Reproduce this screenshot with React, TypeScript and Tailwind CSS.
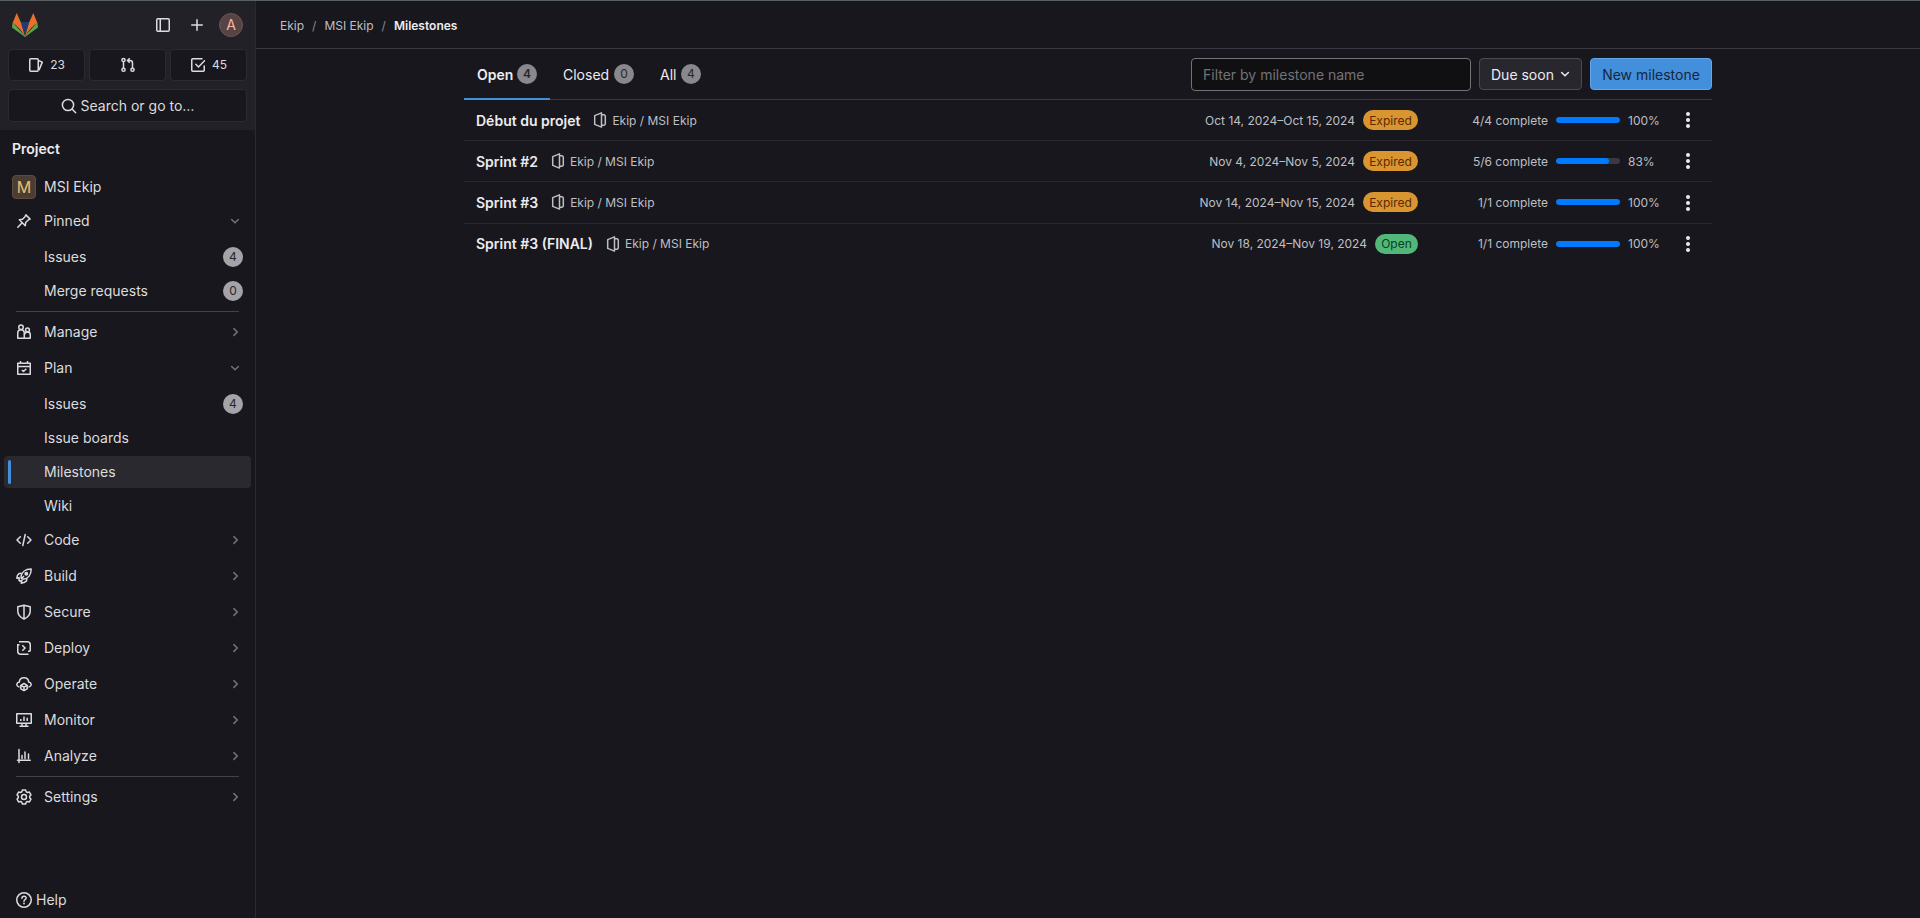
import React from "react";

type IconProps = { children: React.ReactNode; className?: string; size?: number };

function Icon({ children, className = "", size = 16 }: IconProps) {
  return (
    <svg
      width={size}
      height={size}
      viewBox="0 0 16 16"
      fill="none"
      stroke="currentColor"
      strokeWidth="1.5"
      className={"shrink-0 " + className}
    >
      {children}
    </svg>
  );
}

const ChevronDown = ({ className = "" }: { className?: string }) => (
  <Icon size={12} className={className}>
    <path d="M3.5 6 8 10.3 12.5 6" strokeWidth="2" strokeLinecap="round" />
  </Icon>
);
const ChevronRight = ({ className = "" }: { className?: string }) => (
  <Icon size={12} className={className}>
    <path d="M6.500 3.500 11 8l-4.500 4.500" strokeWidth="2" strokeLinecap="round" />
  </Icon>
);

const icons = {
  pin: (
    <Icon>
      <path d="M9.900 1.900 14.100 6.100 12 7.200 9.700 9.500 9.300 12.700 3.300 6.700 6.500 6.300 8.800 4Z" strokeLinejoin="round" />
      <path d="M6.200 9.800 1.800 14.200" strokeLinecap="round" />
    </Icon>
  ),
  users: (
    <Icon>
      <circle cx="5" cy="3.250" r="2.250" />
      <circle cx="11.500" cy="6" r="1.900" />
      <path d="M1.750 14.250V9a3.250 3.250 0 0 1 6.500 0v5.250Z" strokeLinejoin="round" />
      <path d="M8.250 14.250h6v-3.300a2.750 2.750 0 0 0-5.500-.5" strokeLinejoin="round" />
    </Icon>
  ),
  plan: (
    <Icon>
      <path d="M1.750 3.250h12.500v11H1.750ZM1.750 6.500h12.500M4.500 1v2M11.500 1v2" strokeLinejoin="round" />
      <path d="m5.800 10 1.700 1.500 2.800-2.700" strokeLinejoin="round" />
    </Icon>
  ),
  code: (
    <Icon>
      <path d="M4.300 4.700 1 8l3.300 3.300M11.700 4.700 15 8l-3.300 3.300M9.200 2.500 6.800 13.500" strokeLinecap="round" strokeLinejoin="round" />
    </Icon>
  ),
  rocket: (
    <Icon>
      <path d="M5 9c.4-4.600 4.100-8 10.200-8 0 5.900-3.300 9.800-8.200 10.200Z" strokeLinejoin="round" />
      <path d="M5.600 5.200 3.200 5.400C1.500 6.600.8 8.400.8 10.300l2.900-.8M10.800 10.200l-.2 2.600c-1.200 1.600-3 2.400-5.400 2.400l.9-3.100M3.700 9.500 2.900 12l.8 1.200 2.700-1M5 11 8 8" strokeLinejoin="round" />
      <circle cx="10.300" cy="5.700" r="1.200" fill="currentColor" />
    </Icon>
  ),
  shield: (
    <Icon>
      <path d="M8 1.200 14.200 2.800v4.400c0 3.500-2.400 5.900-6.200 7.900-3.800-2-6.200-4.400-6.200-7.900V2.800ZM8 1.200v13.600" strokeLinejoin="round" />
    </Icon>
  ),
  deploy: (
    <Icon>
      <path d="M3 1.750h8.250a3 3 0 0 1 3 3v6.500M1.750 4v7.250a3 3 0 0 0 3 3H12.500M1.750 4.750H3.500M14.250 11.250H12" />
      <path d="M6.300 5.300 9 8l-2.700 2.700" />
    </Icon>
  ),
  operate: (
    <Icon>
      <path d="M2.900 10.900C-.2 9.800.3 6.500 3.300 6.100 3.500 3.300 5.500 1.700 8 1.700s4.500 1.600 4.700 4.400c3 .4 3.500 3.700.4 4.800" strokeLinecap="round" />
      <path d="m8 7.500 3.200 1.800v3.500L8 14.600l-3.200-1.800V9.300ZM4.800 9.300 8 11.100l3.200-1.800M8 11.100v3.500" strokeLinejoin="round" />
    </Icon>
  ),
  monitor: (
    <Icon>
      <path d="M.75 1.750h14.500v9.500H.75ZM4.800 9V7M8 9V4.500M11.200 9V5.800M3.500 14.250h9M6 11.500v2.500M10 11.500v2.500" strokeLinejoin="round" />
    </Icon>
  ),
  chart: (
    <Icon>
      <path d="M3 1.500v13M1.500 12.250h12.750M6 10.500V7.500M9 10.500V4M12.500 10.500V6" strokeLinecap="round" />
    </Icon>
  ),
  settings: (
    <Icon>
      <path d="M6.400.9h3.200l.6 1.900 1.200.7 2-.4 1.600 2.700L13.700 7.300v1.400l1.300 1.500-1.600 2.700-2-.4-1.200.7-.6 1.900H6.400l-.6-1.900-1.200-.7-2 .4L1 10.200l1.300-1.500V7.300L1 5.800l1.600-2.700 2 .4 1.200-.7Z" strokeLinejoin="round" />
      <circle cx="8" cy="8" r="2.500" />
    </Icon>
  ),
};

function Logo() {
  return (
    <svg width="26" height="24" viewBox="0 0 26 24" className="shrink-0">
      <path d="M8.600 9h8.800L13 23Z" fill="#203a78" />
      <path d="M.6 9.300 0 14.500 13 24 26 14.500 25.400 9.300 13 23Z" fill="#5aa648" />
      <path d="M4.700 0 .7 9.700C4.800 12.500 9.300 17 13 23.600L8.800 9.300Z" fill="#e8702c" />
      <path d="M21.300 0l4 9.700C21.200 12.500 16.700 17 13 23.600l4.200-14.300Z" fill="#e8702c" />
    </svg>
  );
}

function Counter({ icon, value }: { icon: React.ReactNode; value?: string }) {
  return (
    <div className="flex h-8 w-[77px] items-center justify-center gap-1.5 rounded border border-[#2b2a31] bg-[#18171d] text-xs leading-4 text-[#dcdcde]">
      {icon}
      {value && <span>{value}</span>}
    </div>
  );
}

function Badge({ value }: { value: string }) {
  return (
    <span className="flex h-5 w-5 items-center justify-center rounded-full bg-[#a4a3a8] text-xs leading-none text-[#28272d]">
      {value}
    </span>
  );
}

type NavProps = {
  label: string;
  icon?: React.ReactNode;
  badge?: string;
  chevron?: "down" | "right";
  active?: boolean;
  tight?: boolean;
};

function NavItem({ label, icon, badge, chevron, active, tight }: NavProps) {
  return (
    <div
      className={
        "mx-1 flex h-8 shrink-0 items-center rounded pr-2 " +
        (tight ? "mt-0.5 " : "mt-1 ") +
        (active ? "bg-[#2a292f] pl-1" : "pl-3")
      }
    >
      {active && <span className="mr-[5px] h-6 w-[3px] rounded-full bg-[#428fdc]" />}
      <span className="w-7 shrink-0">{icon}</span>
      <span className="grow">{label}</span>
      {badge && <Badge value={badge} />}
      {chevron === "down" && <ChevronDown className="mr-0.5 text-[#737278]" />}
      {chevron === "right" && <ChevronRight className="mr-0.5 text-[#737278]" />}
    </div>
  );
}

const Divider = () => <div className="mx-4 mt-1 h-px shrink-0 bg-[#434248]" />;

function Sidebar() {
  return (
    <aside className="flex w-64 shrink-0 flex-col border-r border-[#2b2a31] text-sm leading-4 text-[#dcdcde]">
      <div className="h-[129px] shrink-0 bg-[#222127] px-2 pt-3">
        <div className="flex h-6 items-center pl-1 pr-1">
          <Logo />
          <div className="grow" />
          <Icon className="mr-[18px]">
            <rect x="1.750" y="1.750" width="12.500" height="12.500" rx="1.200" />
            <path d="M5.250 2v12" />
          </Icon>
          <Icon className="mr-3.5">
            <path d="M8 2.750v10.500M2.750 8h10.500" strokeLinecap="round" />
          </Icon>
          <span className="flex h-6 w-6 items-center justify-center rounded-full border border-[#6a5354] bg-[#564344] text-sm text-[#fcb5aa]">
            A
          </span>
        </div>
        <div className="mt-3 flex gap-1">
          <Counter
            value="23"
            icon={
              <Icon>
                <rect x="1.750" y="1.750" width="8.500" height="12.500" rx="1" />
                <path d="m11 3.700 3.300 1.400-3.300 8" strokeLinejoin="round" />
              </Icon>
            }
          />
          <Counter
            icon={
              <Icon>
                <circle cx="3.500" cy="3" r="1.600" />
                <circle cx="3.500" cy="12.750" r="1.600" />
                <circle cx="12.500" cy="12.750" r="1.600" />
                <path d="M3.500 4.600v6.500M12.500 11V6a2.500 2.500 0 0 0-2.500-2.500H8M9.700 1.300 7.500 3.500l2.200 2.200" />
              </Icon>
            }
          />
          <Counter
            value="45"
            icon={
              <Icon>
                <path d="M12 1.750H2.750a1 1 0 0 0-1 1v10.500a1 1 0 0 0 1 1h10.500a1 1 0 0 0 1-1V9" strokeLinecap="round" />
                <path d="m5.800 7.300 2.700 2.700 6-6.200" strokeLinecap="round" />
              </Icon>
            }
          />
        </div>
        <div className="mt-2 flex h-[33px] items-center justify-center gap-1 rounded border border-[#2b2a31] bg-[#18171d]">
          <Icon>
            <circle cx="7" cy="7" r="5.600" />
            <path d="m11 11 3.700 3.700" strokeLinecap="round" />
          </Icon>
          <span>Search or go to…</span>
        </div>
      </div>
      <div className="mt-[11px] px-3 font-semibold text-[#ececef]">Project</div>
      <div className="mt-3.5 flex h-8 shrink-0 items-center gap-2 pl-3">
        <span className="flex h-6 w-6 items-center justify-center rounded border border-[#5e4d3c] bg-[#4b3d31] text-base text-[#e9be74]">
          M
        </span>
        <span>MSI Ekip</span>
      </div>
      <NavItem tight label="Pinned" icon={icons.pin} chevron="down" />
      <NavItem label="Issues" badge="4" />
      <NavItem tight label="Merge requests" badge="0" />
      <Divider />
      <NavItem label="Manage" icon={icons.users} chevron="right" />
      <NavItem label="Plan" icon={icons.plan} chevron="down" />
      <NavItem label="Issues" badge="4" />
      <NavItem tight label="Issue boards" />
      <NavItem tight label="Milestones" active />
      <NavItem tight label="Wiki" />
      <NavItem tight label="Code" icon={icons.code} chevron="right" />
      <NavItem label="Build" icon={icons.rocket} chevron="right" />
      <NavItem label="Secure" icon={icons.shield} chevron="right" />
      <NavItem label="Deploy" icon={icons.deploy} chevron="right" />
      <NavItem label="Operate" icon={icons.operate} chevron="right" />
      <NavItem label="Monitor" icon={icons.monitor} chevron="right" />
      <NavItem label="Analyze" icon={icons.chart} chevron="right" />
      <Divider />
      <NavItem label="Settings" icon={icons.settings} chevron="right" />
      <div className="mt-auto flex h-9 items-center gap-1 pl-4">
        <Icon>
          <circle cx="8" cy="8" r="7.250" />
          <path d="M5.900 6.200c.2-3 4.400-2.500 4.200 0-.1 1.300-2.100 1.400-2.100 3" strokeLinecap="round" />
          <circle cx="8" cy="11.500" r=".9" fill="currentColor" stroke="none" />
        </Icon>
        <span>Help</span>
      </div>
    </aside>
  );
}

type Milestone = {
  title: string;
  dates: string;
  status: "Expired" | "Open";
  done: string;
  percent: number;
  row: string;
  menu: string;
};

const milestones: Milestone[] = [
  { title: "Début du projet", dates: "Oct 14, 2024–Oct 15, 2024", status: "Expired", done: "4/4 complete", percent: 100, row: "h-[41px] border-b leading-[22px]", menu: "mt-0.5" },
  { title: "Sprint #2", dates: "Nov 4, 2024–Nov 5, 2024", status: "Expired", done: "5/6 complete", percent: 83, row: "h-[41px] border-b leading-[22px]", menu: "mt-0.5" },
  { title: "Sprint #3", dates: "Nov 14, 2024–Nov 15, 2024", status: "Expired", done: "1/1 complete", percent: 100, row: "h-[42px] border-b leading-[22px]", menu: "mt-[3px]" },
  { title: "Sprint #3 (FINAL)", dates: "Nov 18, 2024–Nov 19, 2024", status: "Open", done: "1/1 complete", percent: 100, row: "h-[41px] leading-5", menu: "mt-0.5" },
];

function MilestoneRow({ m }: { m: Milestone }) {
  return (
    <li className={"flex items-start border-[#28272d] pl-3 pt-2.5 text-[12px] text-[#bfbfc3] " + m.row}>
      <span className="text-[14px] font-semibold text-[#ececef]">{m.title}</span>
      <Icon className="ml-3 mt-0.5">
        <path d="M2.700 3.600 9.500.9v14.200L2.700 12.400ZM9.700 2.750h2.200a1.400 1.400 0 0 1 1.400 1.400v7.700a1.400 1.400 0 0 1-1.400 1.400H9.700" strokeLinejoin="round" />
      </Icon>
      <span className="ml-1">Ekip / MSI Ekip</span>
      <div className="grow" />
      <span>{m.dates}</span>
      <span
        className={
          "ml-2 flex h-5 items-start justify-center rounded-full " +
          (m.status === "Expired" ? "w-[55px] bg-[#d99530] text-[#5c2900]" : "w-[43px] bg-[#52b87a] text-[#0a4020]")
        }
      >
        {m.status}
      </span>
      <span className="w-[130px] text-right">{m.done}</span>
      <div className="ml-2 mt-[7px] h-1.5 w-16 overflow-hidden rounded-full bg-[#3a393f]">
        <div className="h-full rounded-full bg-[#007bff]" style={{ width: m.percent + "%" }} />
      </div>
      <span className="ml-2 w-[52px]">{m.percent}%</span>
      <svg width="16" height="16" viewBox="0 0 16 16" fill="#ececef" className={"mr-4 shrink-0 " + m.menu}>
        <circle cx="8" cy="2" r="2" />
        <circle cx="8" cy="8" r="2" />
        <circle cx="8" cy="14" r="2" />
      </svg>
    </li>
  );
}

function Tab({ label, count, active, className }: { label: string; count: string; active?: boolean; className: string }) {
  return (
    <div
      className={
        "flex h-[50px] items-center justify-between px-[13px] pb-1 text-sm text-[#ececef] " +
        (active ? "border-b-2 border-[#428fdc] font-semibold " : "border-b border-[#3a393f] ") +
        className
      }
    >
      <span className={active ? "mt-[5px]" : "mt-1"}>{label}</span>
      <span
        className={
          "flex h-5 w-5 items-center justify-center rounded-full bg-[#89888d] text-xs leading-none text-[#28272d] " +
          (active ? "mt-[3px]" : "mt-0.5")
        }
      >
        {count}
      </span>
    </div>
  );
}

export default function App() {
  return (
    <div className="flex h-[918px] w-full overflow-hidden border-t border-[#586064] bg-[#18171d] font-['Inter','Liberation_Sans',sans-serif]">
      <Sidebar />
      <main className="flex grow flex-col">
        <header className="flex h-12 shrink-0 items-center border-b border-[#3a393f] pl-6 pt-0.5 text-xs text-[#bfbfc3]">
          <span>Ekip</span>
          <span className="mx-2 text-[#89888d]">/</span>
          <span>MSI Ekip</span>
          <span className="mx-2 text-[#89888d]">/</span>
          <span className="font-semibold text-[#ececef]">Milestones</span>
        </header>
        <div className="mx-auto w-[1248px]">
          <div className="flex h-[51px] items-end border-b border-[#3a393f]">
            <div className="-mb-px flex h-full items-end">
              <Tab label="Open" count="4" active className="w-[86px]" />
              <Tab label="Closed" count="0" className="w-[97px]" />
              <Tab label="All" count="4" className="w-[67px]" />
            </div>
            <div className="ml-auto flex h-full items-start gap-2 pt-[9px] text-sm leading-4">
              <div className="flex h-[33px] w-[280px] items-center rounded border border-[#737278] bg-[#101012] px-[11px] text-[#737278]">
                Filter by milestone name
              </div>
              <div className="flex h-8 w-[103px] items-center justify-between rounded border border-[#4c4b51] bg-[#28272d] pl-[11px] pr-2.5 text-[#ececef]">
                <span className="pt-0.5">Due soon</span>
                <ChevronDown />
              </div>
              <div className="flex h-8 w-[122px] items-center justify-center rounded border border-[#63a6e9] bg-[#428fdc] pt-0.5 text-[#18253a]">
                New milestone
              </div>
            </div>
          </div>
          <ul>
            {milestones.map((m) => (
              <MilestoneRow key={m.title} m={m} />
            ))}
          </ul>
        </div>
      </main>
    </div>
  );
}
